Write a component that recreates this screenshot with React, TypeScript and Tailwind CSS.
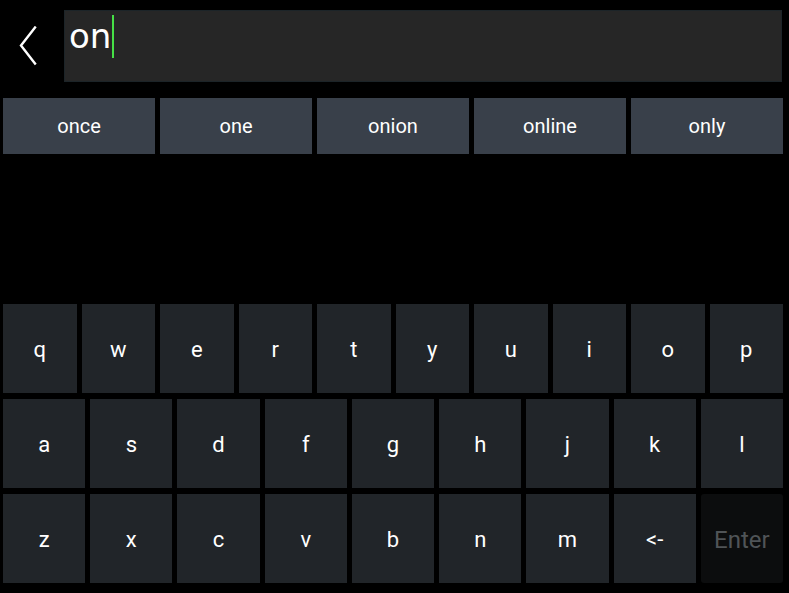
import React from "react";

const suggestions = ["once", "one", "onion", "online", "only"];

const rows: string[][] = [
  ["q", "w", "e", "r", "t", "y", "u", "i", "o", "p"],
  ["a", "s", "d", "f", "g", "h", "j", "k", "l"],
  ["z", "x", "c", "v", "b", "n", "m", "<-", "Enter"],
];

export default function App() {
  return (
    <div
      className="w-[789px] h-[593px] bg-black flex flex-col overflow-hidden"
      style={{ fontFamily: "Roboto, 'Liberation Sans', sans-serif" }}
    >
      {/* top bar: back + text field */}
      <div className="flex items-start pt-[10px] pr-[7px]">
        <button className="w-[64px] h-[72px] flex items-center pl-[19px]">
          <svg width="18" height="40" viewBox="0 0 18 40" fill="none">
            <polyline
              points="16,1.5 2,19.5 16,37.5"
              stroke="#ffffff"
              strokeWidth="2.4"
              strokeLinecap="square"
              strokeLinejoin="miter"
            />
          </svg>
        </button>
        <div className="flex-1 h-[72px] bg-[#262626] border border-[#1c2428] pl-[4px] pt-[4px] flex items-start">
          <span
            className="text-[34px] leading-[43px] text-white"
            style={{ fontFamily: "'DejaVu Sans', sans-serif" }}
          >
            on
          </span>
          <span className="w-[2px] h-[43px] bg-[#46e046] ml-[1px]" />
        </div>
      </div>

      {/* suggestions */}
      <div className="flex gap-[5px] pl-[3px] pr-[6px] mt-[16px]">
        {suggestions.map((s) => (
          <div
            key={s}
            className="flex-1 h-[56px] bg-[#39404a] flex items-center justify-center text-white text-[20px]"
          >
            {s}
          </div>
        ))}
      </div>

      <div className="flex-1" />

      {/* keyboard */}
      <div className="flex flex-col gap-[6px] pl-[3px] pr-[6px] pb-[10px]">
        {rows.map((row, i) => (
          <div key={i} className="flex gap-[5px] h-[89px]">
            {row.map((k) =>
              k === "Enter" ? (
                <div
                  key={k}
                  className="flex-1 bg-[#0c0d0e] rounded-[3px] flex items-center justify-center pt-[2px] text-[24px] text-[#505457]"
                >
                  {k}
                </div>
              ) : (
                <div
                  key={k}
                  className="flex-1 bg-[#212529] flex items-center justify-center pt-[2px] text-[22px] text-white"
                >
                  {k}
                </div>
              )
            )}
          </div>
        ))}
      </div>
    </div>
  );
}
